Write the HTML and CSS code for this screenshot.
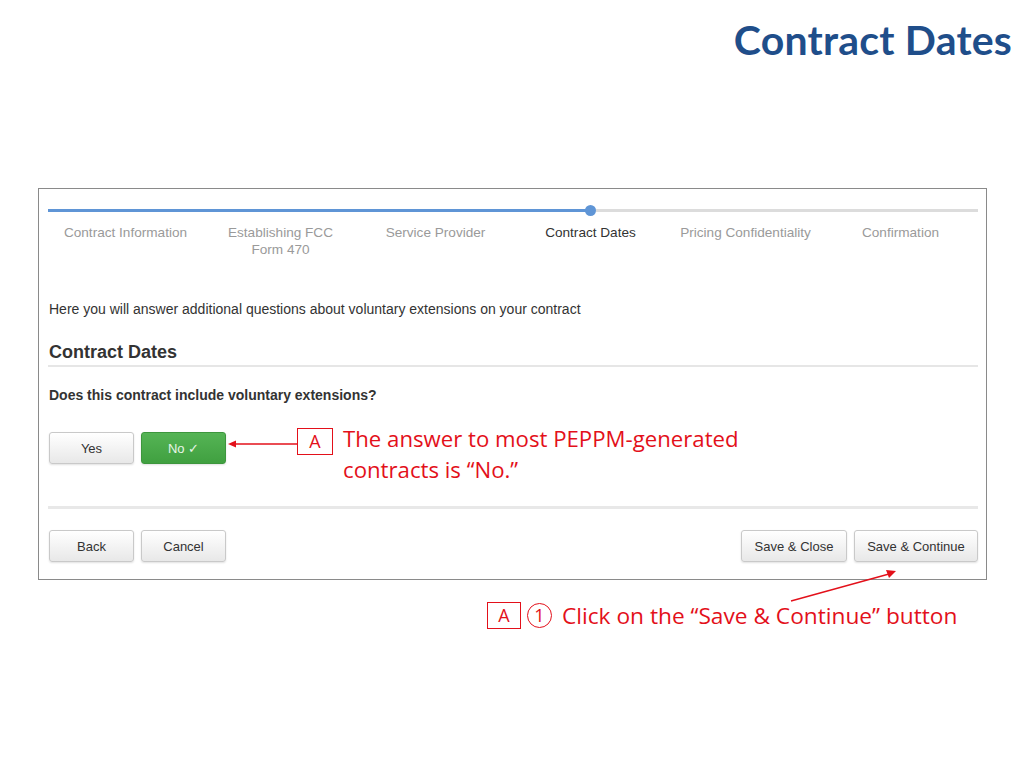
FILE: index.html
```html
<!DOCTYPE html>
<html lang="en">

<head>
    <meta charset="UTF-8">
    <meta name="viewport" content="width=device-width, initial-scale=1.0">
    <title>Contract Dates</title>
    <link rel="stylesheet" href="styles.css">
</head>

<body>
    <div class="slide">
        <h1 class="title">Contract Dates</h1>

        <div class="shot">
            <div class="progress">
                <div class="progress-done"></div>
                <span class="progress-dot"></span>
            </div>
            <ul class="steps">
                <li class="step">Contract Information</li>
                <li class="step">Establishing FCC<br>Form 470</li>
                <li class="step">Service Provider</li>
                <li class="step current">Contract Dates</li>
                <li class="step">Pricing Confidentiality</li>
                <li class="step">Confirmation</li>
            </ul>

            <p class="intro">Here you will answer additional questions about voluntary extensions on your contract</p>
            <h2 class="section">Contract Dates</h2>
            <p class="question">Does this contract include voluntary extensions?</p>

            <div class="answer-row">
                <button class="btn">Yes</button>
                <button class="btn btn-green">No &#10003;</button>
                <svg class="arrow-left" width="69" height="10" viewBox="0 0 69 10">
                    <line x1="6" y1="5" x2="69" y2="5" stroke="#e3101a" stroke-width="1.3" />
                    <polygon points="0,5 8,1.5 8,8.5" fill="#e3101a" />
                </svg>
                <span class="tag">A</span>
                <p class="note">The answer to most PEPPM-generated<br>contracts is &ldquo;No.&rdquo;</p>
            </div>

            <div class="divider"></div>

            <div class="footer">
                <div class="group">
                    <button class="btn">Back</button>
                    <button class="btn">Cancel</button>
                </div>
                <div class="group">
                    <button class="btn btn-close">Save &amp; Close</button>
                    <button class="btn btn-continue">Save &amp; Continue</button>
                </div>
            </div>
        </div>

        <div class="callout">
            <span class="tag">A</span>
            <span class="num">1</span>
            <span class="note">Click on the &ldquo;Save &amp; Continue&rdquo; button</span>
        </div>

        <!-- pointer from the callout up to the button -->
        <svg class="arrow-up" width="110" height="34" viewBox="0 0 110 34">
            <line x1="2" y1="32" x2="100" y2="5" stroke="#e3101a" stroke-width="1.3" />
            <polygon points="107,2 97,1 100,9" fill="#e3101a" />
        </svg>
    </div>
</body>

</html>
```

FILE: styles.css
```css
* {
    margin: 0;
    padding: 0;
    box-sizing: border-box;
}

body {
    background-color: #fff;
    font-family: "Liberation Sans", Arial, sans-serif;
}

li {
    list-style-type: none;
}

.slide {
    width: 1024px;
    height: 768px;
    position: relative;
}

.title {
    text-align: right;
    padding: 15px 12px 0 0;
    height: 188px;
    font-family: Lato, "Open Sans", sans-serif;
    font-size: 41px;
    font-weight: 700;
    color: #1f4e8a;
    letter-spacing: 0.2px;
}

/* the pasted screenshot */
.shot {
    margin-left: 38px;
    width: 949px;
    height: 392px;
    border: 1px solid #8a8a8a;
    padding: 20px 8px 0 9px;
}

.progress {
    height: 3px;
    background-color: #dcdcdc;
    position: relative;
}

.progress .progress-done {
    width: 542px;
    height: 100%;
    background-color: #5f95d6;
}

.progress .progress-dot {
    position: absolute;
    left: 537px;
    top: -4px;
    width: 11px;
    height: 11px;
    border-radius: 50%;
    background-color: #5f95d6;
}

.steps {
    display: grid;
    grid-template-columns: repeat(6, 1fr);
    margin-top: 12px;
    font-size: 13.6px;
    line-height: 17px;
    color: #9a9a9a;
    text-align: center;
}

.steps .current {
    color: #333;
}

.intro {
    margin-top: 43px;
    font-size: 14px;
    line-height: 17px;
    color: #333;
    padding-left: 1px;
}

.section {
    margin-top: 24px;
    padding: 0 0 2px 1px;
    font-size: 18px;
    line-height: 21px;
    font-weight: 700;
    color: #333;
    border-bottom: 2px solid #e6e6e6;
}

.question {
    margin-top: 20px;
    padding-left: 1px;
    font-size: 14px;
    line-height: 17px;
    font-weight: 700;
    color: #333;
}

.answer-row {
    display: flex;
    align-items: flex-start;
    margin-top: 28px;
    height: 74px;
    padding-left: 1px;
}

.btn {
    width: 85px;
    height: 32px;
    margin-right: 7px;
    border: 1px solid #c9c9c9;
    border-radius: 3px;
    background: linear-gradient(#fff, #e8e8e8);
    box-shadow: 0 1px 2px rgba(0, 0, 0, .12);
    font-family: "Liberation Sans", Arial, sans-serif;
    font-size: 13px;
    color: #333;
}

.btn-green {
    background: linear-gradient(#55b455, #40a040);
    border-color: #3d963d;
    color: #e8f5e8;
}

.btn-close {
    width: 106px;
}

.btn-continue {
    width: 124px;
}

.answer-row .arrow-left {
    margin: 7px 0 0 -5px;
}

.tag {
    display: inline-block;
    width: 36px;
    height: 27px;
    border: 1.5px solid #e3101a;
    font-family: "Open Sans", sans-serif;
    font-size: 18px;
    line-height: 24px;
    text-align: center;
    color: #e3101a;
}

.answer-row .tag {
    margin-top: -4px;
}

.note {
    font-family: "Open Sans", sans-serif;
    font-size: 22.2px;
    line-height: 31px;
    color: #e3101a;
}

.answer-row .note {
    margin: -9px 0 0 10px;
}

.divider {
    height: 3px;
    background-color: #e8e8e8;
}

.footer {
    display: flex;
    justify-content: space-between;
    margin-top: 21px;
    padding-left: 1px;
}

.footer .group {
    display: flex;
}

.footer .group:last-child .btn:last-child {
    margin-right: 0;
}

.callout {
    display: flex;
    align-items: center;
    margin: 20px 0 0 487px;
}

.callout .tag {
    width: 34px;
}

.callout .num {
    width: 25px;
    height: 25px;
    margin-left: 6px;
    border: 1.3px solid #e3101a;
    border-radius: 50%;
    font-family: "Open Sans", sans-serif;
    font-size: 18px;
    line-height: 22px;
    text-align: center;
    color: #e3101a;
}

.callout .note {
    margin-left: 10px;
    font-size: 22.7px;
}

.arrow-up {
    position: absolute;
    left: 789px;
    top: 569px;
}
```
